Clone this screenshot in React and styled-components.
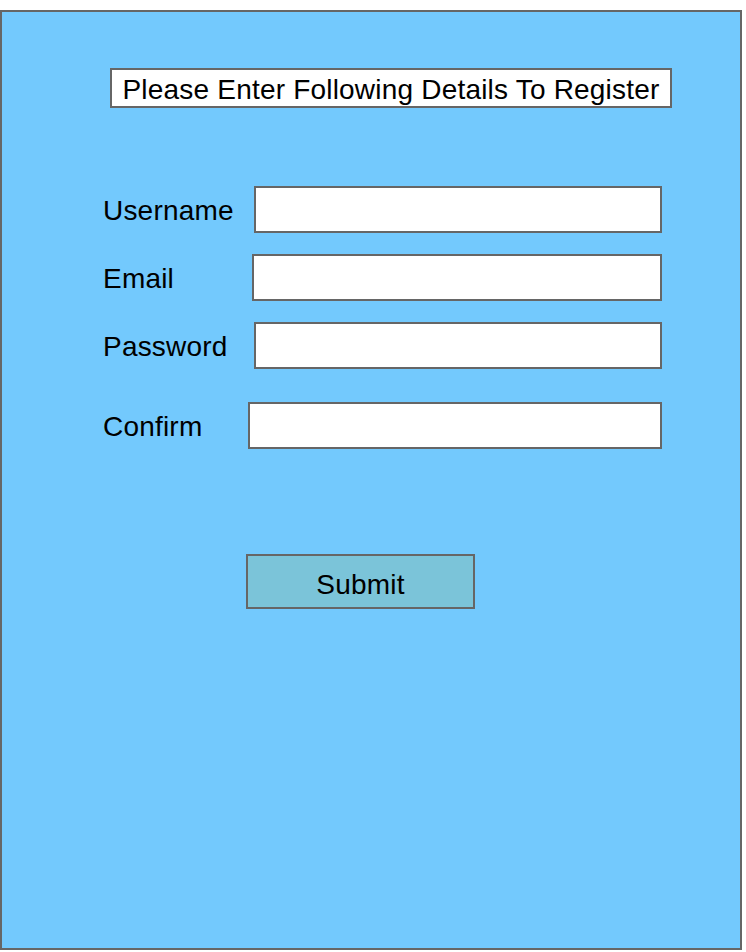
import React from "react";
import styled, { createGlobalStyle } from "styled-components";

const GlobalStyle = createGlobalStyle`
  body {
    margin: 0;
    padding-top: 10px;
    font-family: "Liberation Sans", Arial, sans-serif;
  }
`;

const fields = [
  { label: "Username", labelWidth: 151, gapTop: 0 },
  { label: "Email", labelWidth: 149, gapTop: 21 },
  { label: "Password", labelWidth: 151, gapTop: 21 },
  { label: "Confirm", labelWidth: 145, gapTop: 33 },
];

const App = () => {
  return (
    <>
      <GlobalStyle />
      <Panel>
        <Title>Please Enter Following Details To Register</Title>
        <Form>
          {fields.map((f) => (
            <Row key={f.label} $gapTop={f.gapTop}>
              <Label $width={f.labelWidth}>{f.label}</Label>
              <Input type={f.label === "Username" || f.label === "Email" ? "text" : "password"} />
            </Row>
          ))}
          <SubmitButton type="button">Submit</SubmitButton>
        </Form>
      </Panel>
    </>
  );
};

const Panel = styled.div`
  box-sizing: border-box;
  width: 742px;
  height: 940px;
  background: #73c9fd;
  border: 2px solid #666666;
  padding: 56px 0 0 108px;
`;

const Title = styled.div`
  box-sizing: border-box;
  width: 562px;
  height: 40px;
  background: #ffffff;
  border: 2px solid #666666;
  font-size: 28px;
  letter-spacing: 0.2px;
  line-height: 40px;
  color: #000;
  text-align: center;
  white-space: nowrap;
  overflow: hidden;
`;

const Form = styled.div`
  display: flex;
  flex-direction: column;
  margin-top: 78px;
  margin-left: -7px;
  width: 559px;
`;

const Row = styled.div`
  display: flex;
  align-items: center;
  margin-top: ${(p) => p.$gapTop}px;
`;

const Label = styled.label`
  flex: 0 0 ${(p) => p.$width}px;
  font-size: 28px;
  letter-spacing: 0.2px;
  line-height: 32px;
  padding-top: 3px;
  color: #000;
`;

const Input = styled.input`
  box-sizing: border-box;
  flex: 1;
  height: 47px;
  margin: 0;
  background: #ffffff;
  border: 2px solid #666666;
  border-radius: 0;
  outline: none;
`;

const SubmitButton = styled.button`
  box-sizing: border-box;
  align-self: flex-start;
  width: 229px;
  height: 55px;
  margin: 105px 0 0 143px;
  padding: 6px 0 0;
  background: #7bc4d9;
  border: 2px solid #666666;
  border-radius: 0;
  font-family: "Liberation Sans", Arial, sans-serif;
  font-size: 28px;
  letter-spacing: 0.2px;
  color: #000;
  cursor: pointer;
`;

export default App;
